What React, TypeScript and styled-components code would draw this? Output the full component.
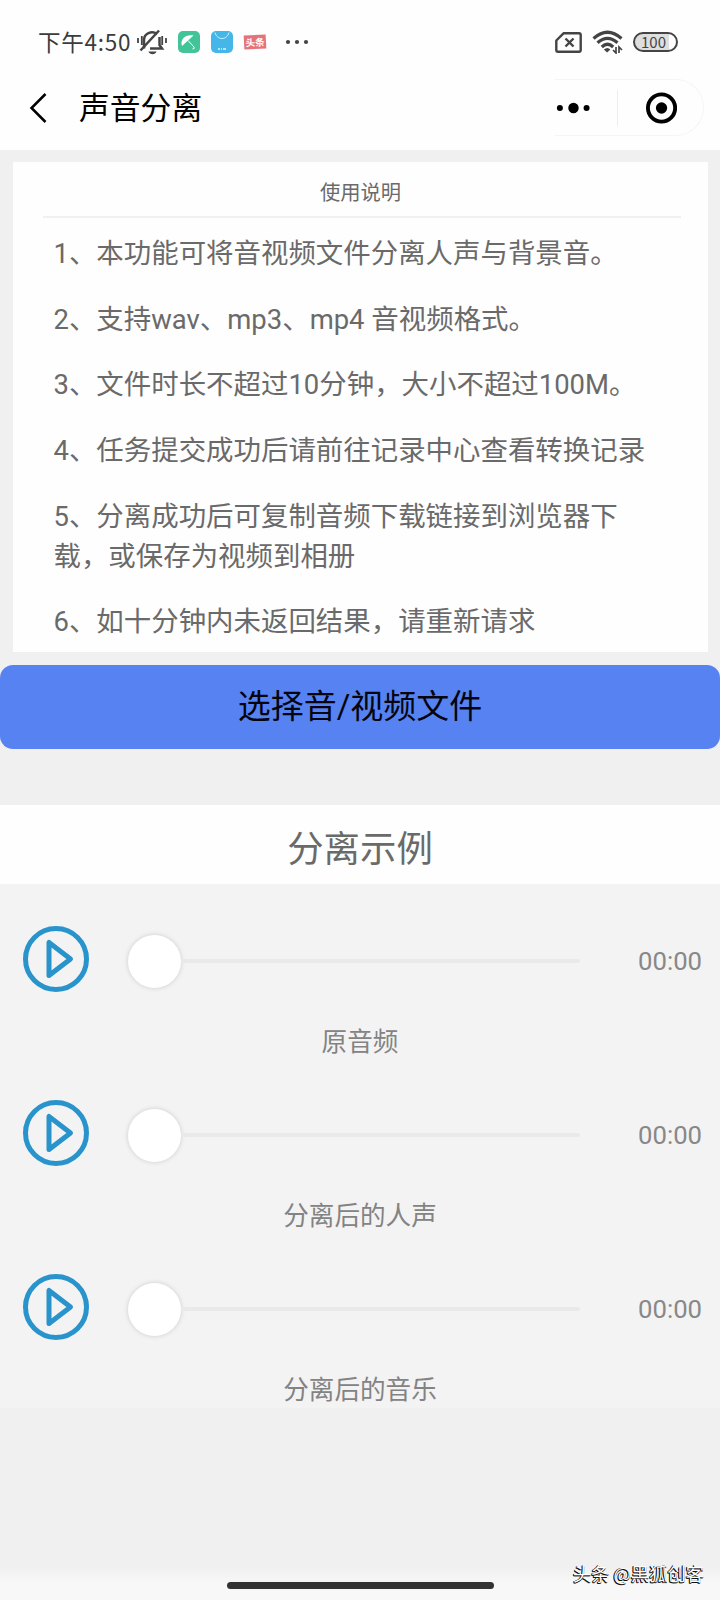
import React from "react";
import styled, { createGlobalStyle } from "styled-components";

const Global = createGlobalStyle`
  * { box-sizing: border-box; }
  body { margin: 0; background: #f0f0f0; font-family: Roboto, "Noto Sans CJK SC", sans-serif; color: #6a6a6a; }
`;

const Page = styled.div`
  position: relative;
  display: flex;
  flex-direction: column;
  width: 720px;
  height: 1600px;
  overflow: hidden;
  background: #f0f0f0;
`;

const StatusBar = styled.header`
  display: flex;
  align-items: center;
  justify-content: space-between;
  height: 78px;
  padding: 6px 42px 0 38px;
  background: #fefefe;
`;
const StatusGroup = styled.div<{ $gap: number }>`
  display: flex;
  align-items: center;
  gap: ${(p) => p.$gap}px;
`;
const Clock = styled.span`
  width: 94px;
  margin: -3px -6px 0 0;
  white-space: nowrap;
  font: 400 22.5px/30px "Noto Sans CJK SC", sans-serif;
  letter-spacing: 0.75px;
  color: #3c3c3c;
`;
const NewsBadge = styled.span`
  display: grid;
  place-items: center;
  width: 22px;
  height: 14px;
  margin-right: 8px;
  transform: rotate(-3deg);
  background: #e4737b;
  color: #fff;
  font: 700 9.5px/13px "Noto Sans CJK SC", sans-serif;
`;
const Battery = styled.span`
  display: grid;
  place-items: center;
  width: 45px;
  height: 20px;
  padding-right: 4px;
  border: 2px solid #444;
  border-radius: 10px;
  background: linear-gradient(90deg, #dedede 84%, #fefefe 84%);
  color: #444;
  font: 400 15px/16px "Noto Sans CJK SC", sans-serif;
`;

const NavBar = styled.nav`
  display: flex;
  align-items: center;
  height: 72px;
  padding: 0 16px 13px 29px;
  background: #fefefe;
`;
const NavTitle = styled.h1`
  flex: 1;
  margin: -4px 0 0 32px;
  font: 400 30.8px/44px "Noto Sans CJK SC", sans-serif;
  color: #000;
`;
const Capsule = styled.div`
  display: flex;
  align-items: center;
  width: 149px;
  height: 57px;
  padding: 0 26px 0 1px;
  border: 1px solid #f5f5f5;
  border-left: 0;
  border-radius: 0 28px 28px 0;
`;
const CapsuleRule = styled.i`
  width: 1px;
  height: 36px;
  margin: 0 28px 0 26px;
  background: #eee;
`;

const Card = styled.section`
  width: 695px;
  height: 490px;
  margin: 12px 0 0 13px;
  padding: 0 27px 0 30px;
  background: #fefefe;
`;
const CardTitle = styled.h2`
  height: 56px;
  margin: 0;
  padding: 16px 3px 0 0;
  border-bottom: 2px solid #f0f0f0;
  text-align: center;
  font-weight: 400;
  font-size: 20.3px;
  line-height: 30px;
`;
const Notes = styled.div`
  display: flex;
  flex-direction: column;
  gap: 25.7px;
  padding: 16px 0 0 10.5px;
`;
const Note = styled.p`
  margin: 0;
  font-size: 27.45px;
  line-height: 40px;
  white-space: nowrap;
`;

const PickButton = styled.button`
  height: 84px;
  margin-top: 13px;
  padding: 0 0 1px;
  border: 0;
  border-radius: 13px;
  background: #5682f2;
  color: #05050f;
  font-family: inherit;
  font-size: 33px;
  line-height: 50px;
`;

const SampleTitle = styled.h2`
  height: 79px;
  margin: 56px 0 0;
  padding-top: 8px;
  background: #fefefe;
  text-align: center;
  font-size: 36.4px;
  font-weight: 400;
  line-height: 73px;
`;
const Samples = styled.section`
  height: 524px;
  padding-top: 35px;
  background: #f3f3f3;
`;
const Sample = styled.article`
  height: 174px;
`;
const Player = styled.div`
  display: flex;
  align-items: center;
  height: 80px;
  padding: 0 18px 0 22px;
`;
const Slider = styled.div`
  display: flex;
  align-items: center;
  width: 452px;
  margin: 4px 0 0 38px;
`;
const Knob = styled.i`
  width: 53px;
  height: 53px;
  border-radius: 50%;
  background: #fff;
  box-shadow: 0 0 5px rgba(0, 0, 0, 0.16);
`;
const Track = styled.i`
  flex: 1;
  height: 4px;
  border-radius: 0 2px 2px 0;
  background: #e9e9e9;
`;
const Time = styled.span`
  flex: 1;
  padding-top: 4px;
  text-align: right;
  font-size: 25.7px;
  line-height: 36px;
  color: #888;
`;
const Caption = styled.p`
  margin: 24px 0 0;
  text-align: center;
  font-size: 25.6px;
  line-height: 38px;
  color: #838383;
`;

const Footer = styled.footer`
  display: flex;
  justify-content: center;
  align-items: flex-end;
  height: 32px;
  margin-top: auto;
  padding-bottom: 11px;
  background: linear-gradient(#f0f0f0, #f8f8f8 50%);
`;
const HomeBar = styled.i`
  width: 267px;
  height: 7px;
  border-radius: 4px;
  background: #333;
`;
const Watermark = styled.span`
  position: absolute;
  right: 16px;
  bottom: 14px;
  white-space: nowrap;
  font: 400 18.3px/26px "Noto Sans CJK SC", sans-serif;
  color: #fff;
  text-shadow: -1px 0 #111, 0 1px #111, -1px 1px #111;
`;

const MutedBell = () => (
  <svg width="30" height="28" viewBox="0 0 30 28" fill="none" stroke="#444" strokeWidth="2.5">
    <path d="M7 20.500V12a8 7.500 0 0 1 13-6M22.500 9v8l2.500 3.500H13" />
    <path d="M3.500 22.500 22 2.500" />
    <path d="M11.500 23.500h8c-1 3.500-7 3.500-8 0Z" fill="#444" stroke="none" />
    <path d="M1 10v5M4.800 8v9M25.200 8v9M29 10v5" strokeWidth="1.800" />
  </svg>
);
const UmbrellaApp = () => (
  <svg width="22" height="22" viewBox="0 0 22 22">
    <rect width="22" height="22" rx="5" fill="#43c498" />
    <path d="M4 15C1.500 8 8 3 15.500 4.500Z" fill="#fff" />
    <path d="m10 9.500 6 6.500q1 2-1.500 2" fill="none" stroke="#fff" strokeWidth="1" />
  </svg>
);
const StoreApp = () => (
  <svg width="22" height="22" viewBox="0 0 22 22">
    <rect width="22" height="22" rx="5" fill="#44b7e8" />
    <path d="M4 1.500c2 8 12 8 14 0" fill="none" stroke="#c9efff" strokeWidth="1" />
    <path d="M7 18h2m1 0h1m1 0h3" stroke="#b5e4fa" strokeWidth="2" />
  </svg>
);
const StatusDots = () => (
  <svg width="24" height="6" viewBox="0 0 24 6" fill="#444">
    <circle cx="3" cy="3" r="2.100" /><circle cx="12" cy="3" r="2.100" /><circle cx="21" cy="3" r="2.100" />
  </svg>
);
const NoSim = () => (
  <svg width="27" height="21" viewBox="0 0 27 21" fill="none" stroke="#444" strokeWidth="2.400">
    <path d="M8.500 1.300H24q1.700 0 1.700 1.700v15q0 1.700-1.700 1.700H3q-1.700 0-1.700-1.700V8.500Z" strokeLinejoin="round" />
    <path d="m10.500 6.500 8 8m0-8-8 8" />
  </svg>
);
const Wifi = () => (
  <svg width="31" height="24" viewBox="0 0 31 24" fill="none" stroke="#444" strokeWidth="3.200">
    <path d="M1.500 8.500Q15.500-4 29.500 8.500M5.500 12.700Q15.500 4 25.500 12.700M9.800 17Q15.500 11.500 21.200 17" />
    <path d="M11.800 19.500q3.700-3 6.600 0l-3.300 3Z" fill="#444" stroke="none" />
    <path d="M24 17v6l-3-3M27 23v-6l3 3" strokeWidth="1.700" />
  </svg>
);
const BackArrow = () => (
  <svg width="18" height="30" viewBox="0 0 18 30" fill="none" stroke="#000" strokeWidth="2.500">
    <path d="M16.500 1 2.500 15l14 14" />
  </svg>
);
const MoreDots = () => (
  <svg width="36" height="12" viewBox="0 0 36 12">
    <circle cx="4" cy="6" r="3.100" /><circle cx="18" cy="6" r="5.400" /><circle cx="31.500" cy="6" r="3.100" />
  </svg>
);
const Target = () => (
  <svg width="32" height="32" viewBox="0 0 32 32">
    <circle cx="16" cy="16" r="14" fill="none" stroke="#000" strokeWidth="4" />
    <circle cx="16" cy="16" r="5.800" />
  </svg>
);
const PlayIcon = () => (
  <svg width="68" height="68" viewBox="0 0 68 68" fill="none" stroke="#2994cb">
    <circle cx="34" cy="34" r="30.500" strokeWidth="5" />
    <path d="M27 17.500v33L48.500 34Z" strokeWidth="5" strokeLinejoin="round" />
  </svg>
);

const notes = [
  ["1、本功能可将音视频文件分离人声与背景音。"],
  ["2、支持wav、mp3、mp4 音视频格式。"],
  ["3、文件时长不超过10分钟，大小不超过100M。"],
  ["4、任务提交成功后请前往记录中心查看转换记录"],
  ["5、分离成功后可复制音频下载链接到浏览器下", "载，或保存为视频到相册"],
  ["6、如十分钟内未返回结果，请重新请求"],
];
const samples = ["原音频", "分离后的人声", "分离后的音乐"];

export default function App() {
  return (
    <Page>
      <Global />
      <StatusBar>
        <StatusGroup $gap={11}>
          <Clock>下午4:50</Clock>
          <MutedBell />
          <UmbrellaApp />
          <StoreApp />
          <NewsBadge>头条</NewsBadge>
          <StatusDots />
        </StatusGroup>
        <StatusGroup $gap={10}>
          <NoSim />
          <Wifi />
          <Battery>100</Battery>
        </StatusGroup>
      </StatusBar>
      <NavBar>
        <BackArrow />
        <NavTitle>声音分离</NavTitle>
        <Capsule>
          <MoreDots />
          <CapsuleRule />
          <Target />
        </Capsule>
      </NavBar>
      <Card>
        <CardTitle>使用说明</CardTitle>
        <Notes>
          {notes.map((lines) => (
            <Note key={lines[0]}>
              {lines.map((line, i) => (
                <React.Fragment key={line}>
                  {i > 0 && <br />}
                  {line}
                </React.Fragment>
              ))}
            </Note>
          ))}
        </Notes>
      </Card>
      <PickButton>选择音/视频文件</PickButton>
      <SampleTitle>分离示例</SampleTitle>
      <Samples>
        {samples.map((name) => (
          <Sample key={name}>
            <Player>
              <PlayIcon />
              <Slider>
                <Knob />
                <Track />
              </Slider>
              <Time>00:00</Time>
            </Player>
            <Caption>{name}</Caption>
          </Sample>
        ))}
      </Samples>
      <Footer>
        <HomeBar />
      </Footer>
      <Watermark>头条 @黑狐创客</Watermark>
    </Page>
  );
}
